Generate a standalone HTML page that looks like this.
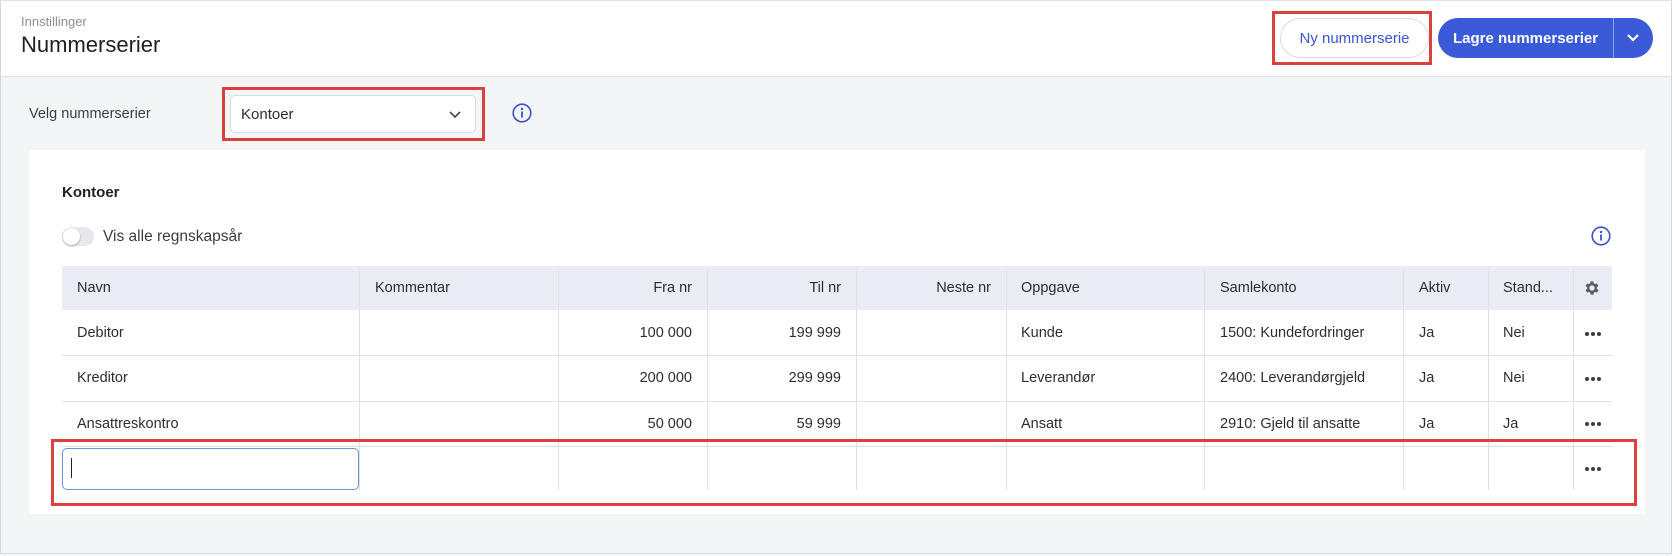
<!DOCTYPE html>
<html><head><meta charset="utf-8"><style>
*{box-sizing:border-box;margin:0;padding:0}
body{width:1672px;height:556px;background:#f4f5f7;font-family:"Liberation Sans",sans-serif;color:#2a2d33;position:relative;overflow:hidden}
.a{position:absolute}
.frame{left:0;top:0;width:1672px;height:554px;border:1px solid #d6d8dc;border-top:1px solid #e2e4e7}
.hdr{left:1px;top:1px;width:1670px;height:76px;background:#fff;border-bottom:1px solid #dcdee2}
.red{border:3px solid #d9413d}
.t{font-size:14.5px;white-space:nowrap}
.th{background:#e9ecf2}
.vl{width:1px;background:#dde0e5}
.hl{height:1px;background:#dde0e5}
</style></head><body>
<div class="a frame"></div>
<div class="a hdr"></div>
<div class="a" style="left:21px;top:14px;font-size:13px;color:#8a8e96">Innstillinger</div>
<div class="a" style="left:21px;top:32px;font-size:22px;color:#1c1f24">Nummerserier</div>
<div class="a red" style="left:1272px;top:11px;width:160px;height:54px"></div>
<div class="a" style="left:1280px;top:18px;width:149px;height:40px;border:1px solid #d8dbe1;border-radius:20px;color:#3a55d6;font-size:15px;line-height:40px;text-align:center">Ny nummerserie</div>
<div class="a" style="left:1438px;top:18px;width:215px;height:40px;border-radius:20px;background:#3a5ad8;color:#fff;font-size:15px;font-weight:bold;line-height:40px">
<span style="position:absolute;left:15px;top:1px">Lagre nummerserier</span>
<div style="position:absolute;left:175px;top:0;width:1px;height:40px;background:#8ea0ea"></div>
<svg style="position:absolute;left:188px;top:14px" width="14" height="12" viewBox="0 0 14 12"><path d="M2 3l5 5 5-5" stroke="#fff" stroke-width="2.2" fill="none"/></svg>
</div>
<div class="a t" style="left:29px;top:106px;color:#3a3d44">Velg nummerserier</div>
<div class="a red" style="left:222px;top:87px;width:263px;height:54px"></div>
<div class="a" style="left:230px;top:95px;width:246px;height:38px;background:#fff;border:1px solid #d8dbe1;border-radius:5px">
<span class="t" style="position:absolute;left:10px;top:10px;font-size:15px">Kontoer</span>
<svg style="position:absolute;left:218px;top:14px" width="12" height="10" viewBox="0 0 12 10"><path d="M1 2l5 5 5-5" stroke="#444" stroke-width="1.6" fill="none"/></svg>
</div>
<svg class="a" style="left:512px;top:103px" width="20" height="20" viewBox="0 0 20 20"><circle cx="10" cy="10" r="8.8" stroke="#3a4fd0" stroke-width="1.6" fill="none"/><circle cx="10" cy="6" r="1.2" fill="#3a4fd0"/><rect x="9.1" y="8.5" width="1.8" height="6" fill="#3a4fd0"/></svg>
<div class="a" style="left:29px;top:150px;width:1616px;height:364px;background:#fff"></div>
<div class="a" style="left:62px;top:184px;font-size:15px;font-weight:bold;color:#222">Kontoer</div>
<div class="a" style="left:62px;top:227px;width:32px;height:19px;border-radius:10px;background:#e6e8ec"></div>
<div class="a" style="left:63px;top:228px;width:17px;height:17px;border-radius:50%;background:#fff;box-shadow:0 1px 2px rgba(0,0,0,.3)"></div>
<div class="a t" style="left:103px;top:228px;font-size:15.5px;color:#3a3d44">Vis alle regnskapsår</div>
<svg class="a" style="left:1591px;top:226px" width="20" height="20" viewBox="0 0 20 20"><circle cx="10" cy="10" r="8.8" stroke="#3a4fd0" stroke-width="1.6" fill="none"/><circle cx="10" cy="6" r="1.2" fill="#3a4fd0"/><rect x="9.1" y="8.5" width="1.8" height="6" fill="#3a4fd0"/></svg>
<div class="a th" style="left:62px;top:266px;width:1550px;height:44px"></div>
<div class="a hl" style="left:62px;top:355px;width:1550px"></div>
<div class="a hl" style="left:62px;top:401px;width:1550px"></div>
<div class="a hl" style="left:62px;top:446px;width:1550px"></div>
<div class="a vl" style="left:359px;top:266px;height:224px"></div>
<div class="a vl" style="left:558px;top:266px;height:224px"></div>
<div class="a vl" style="left:707px;top:266px;height:224px"></div>
<div class="a vl" style="left:856px;top:266px;height:224px"></div>
<div class="a vl" style="left:1006px;top:266px;height:224px"></div>
<div class="a vl" style="left:1204px;top:266px;height:224px"></div>
<div class="a vl" style="left:1403px;top:266px;height:224px"></div>
<div class="a vl" style="left:1488px;top:266px;height:224px"></div>
<div class="a vl" style="left:1573px;top:266px;height:224px"></div>
<div class="a t" style="left:77px;top:280px">Navn</div>
<div class="a t" style="left:375px;top:280px">Kommentar</div>
<div class="a t" style="left:558px;width:134px;text-align:right;top:280px">Fra nr</div>
<div class="a t" style="left:707px;width:134px;text-align:right;top:280px">Til nr</div>
<div class="a t" style="left:856px;width:135px;text-align:right;top:280px">Neste nr</div>
<div class="a t" style="left:1021px;top:280px">Oppgave</div>
<div class="a t" style="left:1220px;top:280px">Samlekonto</div>
<div class="a t" style="left:1419px;top:280px">Aktiv</div>
<div class="a t" style="left:1503px;top:280px">Stand...</div>
<svg class="a" style="left:1583px;top:279px" width="18" height="18" viewBox="0 0 24 24"><path fill="#5a5d64" d="M19.4 13a7.5 7.5 0 000-2l2.1-1.6-2-3.5-2.5 1a7.6 7.6 0 00-1.7-1L15 3.2h-4l-.4 2.7a7.6 7.6 0 00-1.7 1l-2.5-1-2 3.5L6.6 11a7.5 7.5 0 000 2l-2.1 1.6 2 3.5 2.5-1a7.6 7.6 0 001.7 1l.4 2.7h4l.4-2.7a7.6 7.6 0 001.7-1l2.5 1 2-3.5zM13 15.5a3.5 3.5 0 110-7 3.5 3.5 0 010 7z" transform="translate(-1 0)"/></svg>
<div class="a t" style="left:77px;top:325px">Debitor</div>
<div class="a t" style="left:558px;width:134px;text-align:right;top:325px">100 000</div>
<div class="a t" style="left:707px;width:134px;text-align:right;top:325px">199 999</div>
<div class="a t" style="left:1021px;top:325px">Kunde</div>
<div class="a t" style="left:1220px;top:325px">1500: Kundefordringer</div>
<div class="a t" style="left:1419px;top:325px">Ja</div>
<div class="a t" style="left:1503px;top:325px">Nei</div>
<div class="a t" style="left:77px;top:370px">Kreditor</div>
<div class="a t" style="left:558px;width:134px;text-align:right;top:370px">200 000</div>
<div class="a t" style="left:707px;width:134px;text-align:right;top:370px">299 999</div>
<div class="a t" style="left:1021px;top:370px">Leverandør</div>
<div class="a t" style="left:1220px;top:370px">2400: Leverandørgjeld</div>
<div class="a t" style="left:1419px;top:370px">Ja</div>
<div class="a t" style="left:1503px;top:370px">Nei</div>
<div class="a t" style="left:77px;top:416px">Ansattreskontro</div>
<div class="a t" style="left:558px;width:134px;text-align:right;top:416px">50 000</div>
<div class="a t" style="left:707px;width:134px;text-align:right;top:416px">59 999</div>
<div class="a t" style="left:1021px;top:416px">Ansatt</div>
<div class="a t" style="left:1220px;top:416px">2910: Gjeld til ansatte</div>
<div class="a t" style="left:1419px;top:416px">Ja</div>
<div class="a t" style="left:1503px;top:416px">Ja</div>
<svg class="a" style="left:1583px;top:330px" width="20" height="8"><g fill="#3a3d44"><circle cx="4" cy="4" r="2"/><circle cx="10" cy="4" r="2"/><circle cx="16" cy="4" r="2"/></g></svg>
<svg class="a" style="left:1583px;top:375px" width="20" height="8"><g fill="#3a3d44"><circle cx="4" cy="4" r="2"/><circle cx="10" cy="4" r="2"/><circle cx="16" cy="4" r="2"/></g></svg>
<svg class="a" style="left:1583px;top:420px" width="20" height="8"><g fill="#3a3d44"><circle cx="4" cy="4" r="2"/><circle cx="10" cy="4" r="2"/><circle cx="16" cy="4" r="2"/></g></svg>
<svg class="a" style="left:1583px;top:465px" width="20" height="8"><g fill="#3a3d44"><circle cx="4" cy="4" r="2"/><circle cx="10" cy="4" r="2"/><circle cx="16" cy="4" r="2"/></g></svg>
<div class="a" style="left:62px;top:448px;width:297px;height:42px;background:#fff;border:1.5px solid #6b93d6;border-radius:5px"></div>
<div class="a" style="left:71px;top:458px;width:1px;height:20px;background:#222"></div>
<div class="a red" style="left:51px;top:439px;width:1586px;height:67px"></div>
</body></html>
